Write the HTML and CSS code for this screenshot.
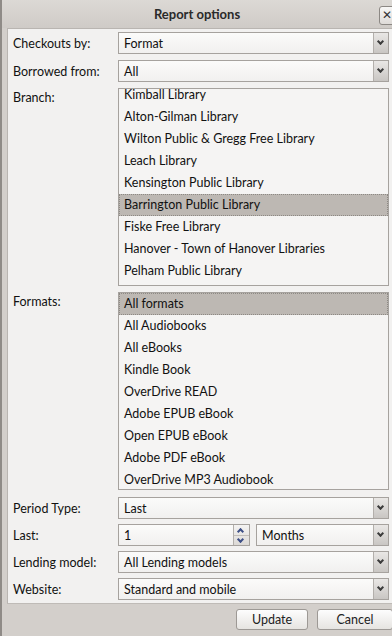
FILE: index.html
```html
<!DOCTYPE html>
<html lang="en">
<head>
    <meta charset="UTF-8">
    <title>Report options</title>
    <link rel="stylesheet" href="styles.css">
</head>
<body>
    <div class="dialog">
        <div class="titlebar">
            <span class="title">Report options</span>
            <span class="close">&#x2715;</span>
        </div>

        <div class="panel">
            <div class="row">
                <label>Checkouts by:</label>
                <div class="select"><span>Format</span><i class="arrow"></i></div>
            </div>
            <div class="row">
                <label>Borrowed from:</label>
                <div class="select"><span>All</span><i class="arrow"></i></div>
            </div>
            <div class="row list-row">
                <label>Branch:</label>
                <ul class="listbox scrolled">
                    <li>Kimball Library</li>
                    <li>Alton-Gilman Library</li>
                    <li>Wilton Public &amp; Gregg Free Library</li>
                    <li>Leach Library</li>
                    <li>Kensington Public Library</li>
                    <li class="selected">Barrington Public Library</li>
                    <li>Fiske Free Library</li>
                    <li>Hanover - Town of Hanover Libraries</li>
                    <li>Pelham Public Library</li>
                </ul>
            </div>
            <div class="row list-row">
                <label>Formats:</label>
                <ul class="listbox">
                    <li class="selected">All formats</li>
                    <li>All Audiobooks</li>
                    <li>All eBooks</li>
                    <li>Kindle Book</li>
                    <li>OverDrive READ</li>
                    <li>Adobe EPUB eBook</li>
                    <li>Open EPUB eBook</li>
                    <li>Adobe PDF eBook</li>
                    <li>OverDrive MP3 Audiobook</li>
                </ul>
            </div>
            <div class="period">
                <div class="row">
                    <label>Period Type:</label>
                    <div class="select"><span>Last</span><i class="arrow"></i></div>
                </div>
                <div class="row">
                    <label>Last:</label>
                    <div class="pair">
                        <div class="spin">
                            <span>1</span>
                            <div class="spin-btns">
                                <i class="up"></i>
                                <i class="down"></i>
                            </div>
                        </div>
                        <div class="select"><span>Months</span><i class="arrow"></i></div>
                    </div>
                </div>
                <div class="row">
                    <label>Lending model:</label>
                    <div class="select"><span>All Lending models</span><i class="arrow"></i></div>
                </div>
                <div class="row">
                    <label>Website:</label>
                    <div class="select"><span>Standard and mobile</span><i class="arrow"></i></div>
                </div>
            </div>
        </div>

        <div class="buttons">
            <button class="update">Update</button>
            <button class="cancel">Cancel</button>
        </div>
    </div>
</body>
</html>
```

FILE: styles.css
```css
body {
    margin: 0;
    font-family: Lato, "Liberation Sans", sans-serif;
    font-size: 12.5px;
    color: #111;
    background: #d3cfcb;
}

.dialog {
    width: 392px;
    height: 636px;
    box-sizing: border-box;
    border-left: 2px solid #8f8b87;
    display: flex;
    flex-direction: column;
    overflow: hidden;
}

.titlebar {
    height: 28px;
    display: flex;
    align-items: center;
    justify-content: center;
    position: relative;
    background: linear-gradient(#dcd9d5, #cfcbc7);
}

.title {
    font-weight: bold;
    font-size: 13px;
    color: #2a2a2a;
}

.close {
    position: absolute;
    right: -3px;
    top: 6px;
    width: 14px;
    height: 17px;
    border: 1px solid #8c8884;
    border-radius: 3px;
    background: linear-gradient(#f8f7f6, #dedbd8);
    font-family: "DejaVu Sans", sans-serif;
    font-size: 12px;
    line-height: 17px;
    text-align: center;
    color: #333;
}

.panel {
    margin-left: 5px;
    background: #f2f1f0;
    border-top: 1px solid #b9b5b1;
    border-left: 1px solid #b9b5b1;
    border-bottom: 1px solid #bfbbb7;
    padding: 3px 3px 3px 4px;
    display: flex;
    flex-direction: column;
    gap: 6px;
}

.period {
    display: flex;
    flex-direction: column;
    gap: 5px;
    padding-top: 1px;
}

.row {
    display: grid;
    grid-template-columns: 106px 1fr;
    align-items: center;
}

.row label {
    padding-left: 1px;
}

.list-row {
    align-items: start;
}

.list-row label {
    padding-top: 2px;
}

.select, .spin {
    height: 22px;
    box-sizing: border-box;
    border: 1px solid #a6a29e;
    background: linear-gradient(#fbfbfa, #f1f0ef);
    display: flex;
    align-items: center;
}

.select span, .spin span {
    flex: 1;
    padding-left: 5px;
}

.arrow {
    width: 14px;
    align-self: stretch;
    border-left: 1px solid #b3afab;
    background: linear-gradient(#e9e7e5, #c9c6c3);
    position: relative;
}

.arrow::after {
    content: "";
    position: absolute;
    left: 4px;
    top: 6px;
    width: 3px;
    height: 3px;
    border-right: 2px solid #3c3c3c;
    border-bottom: 2px solid #3c3c3c;
    transform: rotate(45deg);
}

.pair {
    display: grid;
    grid-template-columns: 132px 1fr;
    gap: 6px;
}

.spin-btns {
    width: 15px;
    align-self: stretch;
    border-left: 1px solid #b3afab;
    background: linear-gradient(#f4f3f2, #dcd9d6);
    display: flex;
    flex-direction: column;
}

.spin-btns i {
    flex: 1;
    position: relative;
}

.spin-btns .up {
    border-bottom: 1px solid #c2beba;
}

.spin-btns i::after {
    content: "";
    position: absolute;
    left: 4px;
    width: 3px;
    height: 3px;
    border-color: #3d4f86;
    border-style: solid;
    border-width: 0;
    transform: rotate(45deg);
}

.spin-btns .up::after {
    top: 4px;
    border-left-width: 2px;
    border-top-width: 2px;
}

.spin-btns .down::after {
    top: 1px;
    border-right-width: 2px;
    border-bottom-width: 2px;
}

.listbox {
    list-style: none;
    margin: 0;
    padding: 0;
    height: 198px;
    box-sizing: border-box;
    overflow: hidden;
    border: 1px solid #a6a29e;
    background: #f5f4f3;
}

.listbox.scrolled li:first-child {
    margin-top: -5px;
}

.listbox li {
    height: 22px;
    line-height: 22px;
    padding-left: 5px;
    box-sizing: border-box;
}

.listbox li.selected {
    background: #bdb8b3;
    border: 1px dotted #8d8984;
    line-height: 20px;
    padding-left: 4px;
}

.buttons {
    flex: 1;
    display: flex;
    justify-content: flex-end;
    align-items: flex-start;
    gap: 9px;
    padding: 5px 0 0;
    margin-right: -1px;
}

.buttons button {
    height: 21px;
    font-family: inherit;
    font-size: 12.5px;
    color: #222;
    border: 1px solid #9d9995;
    border-radius: 3px;
    background: linear-gradient(#fdfdfd, #e6e4e1);
}

.update {
    width: 72px;
}

.cancel {
    width: 76px;
}
```
